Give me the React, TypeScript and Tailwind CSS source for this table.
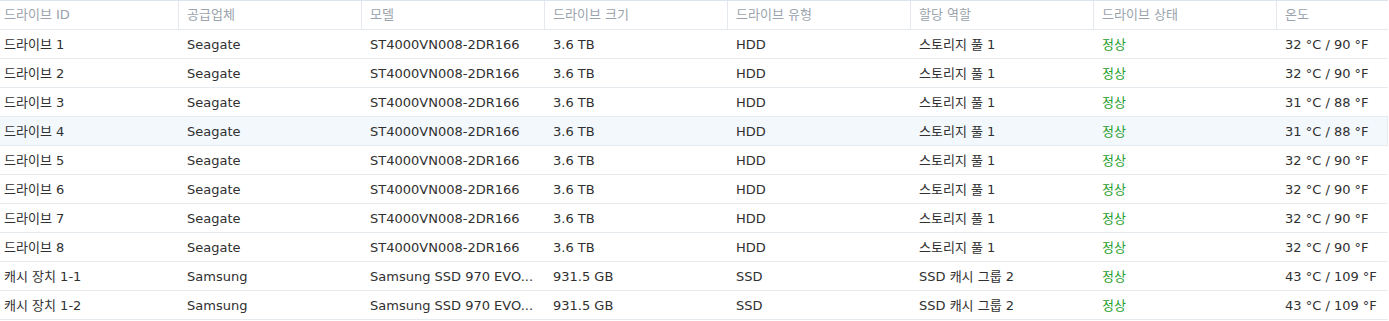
import React from "react";

const headers = ["드라이브 ID", "공급업체", "모델", "드라이브 크기", "드라이브 유형", "할당 역할", "드라이브 상태", "온도"];

type Row = string[];
const rows: Row[] = [
  ["드라이브 1", "Seagate", "ST4000VN008-2DR166", "3.6 TB", "HDD", "스토리지 풀 1", "정상", "32 °C / 90 °F"],
  ["드라이브 2", "Seagate", "ST4000VN008-2DR166", "3.6 TB", "HDD", "스토리지 풀 1", "정상", "32 °C / 90 °F"],
  ["드라이브 3", "Seagate", "ST4000VN008-2DR166", "3.6 TB", "HDD", "스토리지 풀 1", "정상", "31 °C / 88 °F"],
  ["드라이브 4", "Seagate", "ST4000VN008-2DR166", "3.6 TB", "HDD", "스토리지 풀 1", "정상", "31 °C / 88 °F"],
  ["드라이브 5", "Seagate", "ST4000VN008-2DR166", "3.6 TB", "HDD", "스토리지 풀 1", "정상", "32 °C / 90 °F"],
  ["드라이브 6", "Seagate", "ST4000VN008-2DR166", "3.6 TB", "HDD", "스토리지 풀 1", "정상", "32 °C / 90 °F"],
  ["드라이브 7", "Seagate", "ST4000VN008-2DR166", "3.6 TB", "HDD", "스토리지 풀 1", "정상", "32 °C / 90 °F"],
  ["드라이브 8", "Seagate", "ST4000VN008-2DR166", "3.6 TB", "HDD", "스토리지 풀 1", "정상", "32 °C / 90 °F"],
  ["캐시 장치 1-1", "Samsung", "Samsung SSD 970 EVO...", "931.5 GB", "SSD", "SSD 캐시 그룹 2", "정상", "43 °C / 109 °F"],
  ["캐시 장치 1-2", "Samsung", "Samsung SSD 970 EVO...", "931.5 GB", "SSD", "SSD 캐시 그룹 2", "정상", "43 °C / 109 °F"],
];

const grid = "grid grid-cols-[178px_183px_183px_183px_183px_183px_183px_1fr]";

export default function App() {
  return (
    <div
      className="w-[1389px] h-[321px] bg-white text-[13px] overflow-hidden"
      style={{ fontFamily: '"DejaVu Sans", "Noto Sans CJK KR", sans-serif' }}
    >
      <div className="w-[1388px] border-t border-[#dbe5ef]">
        <div className={`${grid} h-[29px] border-b border-[#e3e9ef] text-[#9aa3ad] items-center`}>
          {headers.map((h, i) => (
            <div
              key={i}
              className={i === 0 ? "pl-[4px] h-full flex items-center" : "pl-[8px] h-full flex items-center border-l border-[#e3e9ef]"}
            >
              {h}
            </div>
          ))}
        </div>
        {rows.map((r, ri) => (
          <div
            key={ri}
            className={`${grid} h-[29px] pt-[2px] border-b border-[#e6ebf0] items-center text-[#303030] ${ri === 3 ? "bg-[#f3f8fd] border-r" : ""}`}
          >
            {r.map((c, ci) => (
              <div
                key={ci}
                className={`${ci === 0 ? "pl-[4px]" : "pl-[9px]"} whitespace-nowrap ${ci === 6 ? "text-[#1e9e2a]" : ""}`}
              >
                {c}
              </div>
            ))}
          </div>
        ))}
      </div>
    </div>
  );
}
